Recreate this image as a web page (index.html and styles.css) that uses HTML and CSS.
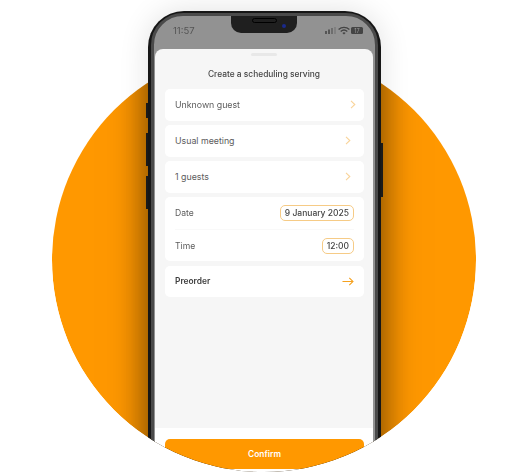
FILE: index.html
```html
<!DOCTYPE html>
<html lang="en">
<head>
  <meta charset="UTF-8">
  <title>Create a scheduling serving</title>
  <link rel="stylesheet" href="styles.css">
</head>
<body>
  <div class="stage">
    <div class="circle">
      <div class="circle-shade"></div>
    </div>
    <div class="phone">
      <span class="side-btn side-mute"></span>
      <span class="side-btn side-up"></span>
      <span class="side-btn side-down"></span>
      <span class="side-btn side-power"></span>
      <div class="screen">
        <div class="notch">
          <span class="speaker"></span>
          <span class="camera"></span>
        </div>
        <div class="status">
          <span class="clock">11:57</span>
          <svg class="status-icons" width="39" height="9" viewBox="0 0 39 9">
            <g fill="#555">
              <rect x="0" y="5" width="2" height="3"/>
              <rect x="3" y="3.5" width="2" height="4.5"/>
              <rect x="6" y="2" width="2" height="6" opacity=".6"/>
              <rect x="9" y="1" width="2" height="7" opacity=".3"/>
            </g>
            <path d="M13.6 3.4a8 8 0 0 1 10.8 0M15.7 5.4a5 5 0 0 1 6.6 0" fill="none" stroke="#444" stroke-width="1.3"/>
            <path d="M17.4 7a2.4 2.4 0 0 1 3.2 0L19 8.6z" fill="#444"/>
            <rect x="26" y="1" width="12" height="7" rx="1.5" fill="#444"/>
            <text class="battery-level" x="32" y="6.6" text-anchor="middle">17</text>
          </svg>
        </div>
        <div class="sheet">
          <div class="handle"></div>
          <h1 class="sheet-title">Create a scheduling serving</h1>
          <div class="rows">
            <div class="row">
              <span>Unknown guest</span>
              <svg class="chevron" width="6" height="9" viewBox="0 0 6 9"><path d="M1 .8 4.8 4.5 1 8.2"/></svg>
            </div>
            <div class="row">
              <span>Usual meeting</span>
              <svg class="chevron chevron-inset" width="6" height="9" viewBox="0 0 6 9"><path d="M1 .8 4.8 4.5 1 8.2"/></svg>
            </div>
            <div class="row">
              <span>1 guests</span>
              <svg class="chevron chevron-inset" width="6" height="9" viewBox="0 0 6 9"><path d="M1 .8 4.8 4.5 1 8.2"/></svg>
            </div>
            <div class="card">
              <div class="card-line">
                <span>Date</span>
                <span class="pill">9 January 2025</span>
              </div>
              <div class="card-line">
                <span>Time</span>
                <span class="pill">12:00</span>
              </div>
            </div>
            <div class="row row-strong">
              <span>Preorder</span>
              <svg class="arrow" width="12" height="9" viewBox="0 0 12 9"><path d="M.5 4.5H11M7.3.8 11 4.5 7.3 8.2"/></svg>
            </div>
          </div>
          <div class="sheet-footer">
            <button class="confirm">Confirm</button>
          </div>
        </div>
      </div>
    </div>
  </div>
</body>
</html>
```

FILE: styles.css
```css
html, body {
  margin: 0;
  padding: 0;
  background: #fff;
}
body {
  font-family: Inter, "Liberation Sans", sans-serif;
  width: 530px;
  height: 476px;
  overflow: hidden;
}
.stage {
  position: relative;
  width: 530px;
  height: 476px;
  padding-top: 11px;
  box-sizing: border-box;
  overflow: hidden;
  clip-path: path("M0 260 V0 H530 V260 H476 A212 212 0 0 1 52 260 Z");
}
.circle {
  position: absolute;
  left: 52px;
  top: 48px;
  width: 424px;
  height: 424px;
  border-radius: 50%;
  background: #ff9800;
  overflow: hidden;
}
.circle-shade {
  position: absolute;
  left: 96px;
  top: -60px;
  width: 233px;
  height: 560px;
  box-shadow: 0 0 36px rgba(0, 0, 0, 0.52);
}
.phone {
  position: relative;
  width: 233px;
  height: 520px;
  margin-left: 148px;
  box-sizing: border-box;
  padding: 2px 3px;
  background: #161616;
  border-radius: 36px;
  box-shadow: 0 0 30px rgba(0, 0, 0, 0.12);
}
.side-btn {
  position: absolute;
  width: 2px;
  background: #1a1a1a;
}
.side-mute { left: -2px; top: 92px; height: 15px; }
.side-up { left: -2px; top: 122px; height: 33px; }
.side-down { left: -2px; top: 165px; height: 33px; }
.side-power { right: -2px; top: 132px; height: 54px; }
.screen {
  position: relative;
  height: 100%;
  box-sizing: border-box;
  padding: 0 2px 0 1px;
  background: #929292;
  border: 3px solid #4a4a4a;
  border-radius: 32px;
  overflow: hidden;
  filter: blur(0.3px);
}
.notch {
  position: absolute;
  left: 77px;
  top: 0;
  width: 66px;
  height: 17px;
  background: #1f1f1f;
  border-radius: 0 0 10px 10px;
}
.speaker {
  position: absolute;
  left: 21px;
  top: 2px;
  width: 25px;
  height: 5px;
  border: 1px solid #000;
  border-radius: 3px;
  box-sizing: border-box;
}
.camera {
  position: absolute;
  left: 51px;
  top: 8px;
  width: 4px;
  height: 4px;
  border-radius: 50%;
  background: #1a2a8c;
}
.status {
  display: flex;
  justify-content: space-between;
  align-items: center;
  height: 33px;
  padding: 0 9px 4px 18px;
  box-sizing: border-box;
}
.clock {
  font-size: 9.5px;
  color: #555;
}
.battery-level {
  font-size: 5.5px;
  fill: #999;
}
.sheet {
  display: flex;
  flex-direction: column;
  height: 470px;
  background: #f6f6f6;
  border-radius: 8px 8px 0 0;
}
.handle {
  width: 26px;
  height: 3px;
  margin: 4px auto 0;
  background: #e8e8e8;
  border-radius: 2px;
}
.sheet-title {
  margin: 13px 0 0;
  font-size: 8.4px;
  line-height: 11px;
  font-weight: 500;
  color: #444;
  text-align: center;
}
.rows {
  display: flex;
  flex-direction: column;
  gap: 4.5px;
  margin: 9px 9px 0 10px;
}
.row {
  display: flex;
  justify-content: space-between;
  align-items: center;
  height: 31.5px;
  padding: 0 8px 0 10px;
  background: #fff;
  border-radius: 5px;
  font-size: 8.8px;
  color: #5c5c5c;
}
.row-strong {
  font-size: 8.4px;
  font-weight: 600;
  color: #3d3d3d;
}
.chevron path {
  fill: none;
  stroke: #f9d49a;
  stroke-width: 1.1;
}
.chevron-inset {
  margin-right: 5px;
}
.arrow {
  margin-right: 2px;
}
.arrow path {
  fill: none;
  stroke: #f5a11f;
  stroke-width: 1.1;
}
.card {
  height: 64px;
  padding: 0 10px;
  background: #fff;
  border-radius: 5px;
  font-size: 8.6px;
  color: #5c5c5c;
}
.card-line {
  display: flex;
  justify-content: space-between;
  align-items: center;
  height: 32px;
}
.card-line + .card-line {
  border-top: 1px solid #f9f9f9;
  box-sizing: border-box;
}
.pill {
  padding: 2px 4px;
  line-height: 10px;
  border: 1px solid #f6cb86;
  border-radius: 5px;
  color: #444;
  font-size: 8.5px;
  font-weight: 500;
}
.sheet-footer {
  flex: 1;
  margin-top: 131px;
  padding: 11px 9px 0 10px;
  background: #fff;
}
.confirm {
  display: block;
  width: 100%;
  height: 29.5px;
  padding: 0;
  background: #ff9800;
  color: #fff;
  border: none;
  border-radius: 5px;
  font-family: inherit;
  font-size: 8.4px;
  font-weight: 600;
}
```
